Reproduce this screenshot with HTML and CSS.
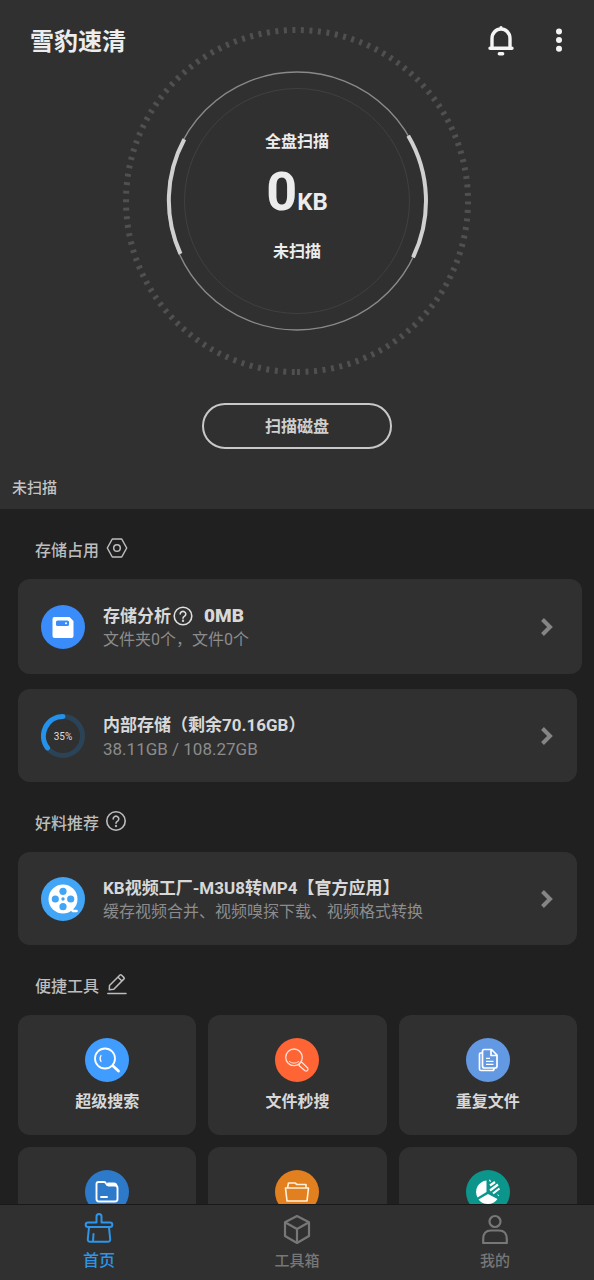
FILE: index.html
```html
<!DOCTYPE html>
<html lang="zh-CN">
<head>
<meta charset="utf-8">
<meta name="viewport" content="width=device-width, initial-scale=1">
<title>雪豹速清</title>
<link rel="stylesheet" href="styles.css">
</head>
<body>
<div class="app">
  <main class="content">
    <section class="hero">
      <header class="topbar">
        <h1 class="brand">雪豹速清</h1>
        <button class="icon-btn" aria-label="通知">
          <svg width="28" height="32" viewBox="0 0 28 32" fill="none" stroke="#f4f4f4" stroke-width="3.4" stroke-linecap="round" stroke-linejoin="round"><path d="M5 24V14.500a9 9.500 0 0 1 18 0V24M3 24.300H25M14 3.700V5M12.300 29.700H15.700"/></svg>
        </button>
        <button class="icon-btn" aria-label="更多">
          <svg width="8" height="32" viewBox="0 0 8 32" fill="#f4f4f4"><circle cx="4" cy="7.500" r="3"/><circle cx="4" cy="16" r="3"/><circle cx="4" cy="24.800" r="3"/></svg>
        </button>
      </header>
      <div class="dial">
        <svg class="dial-rings" width="352" height="352" viewBox="0 0 352 352" fill="none">
          <path d="M176 347A171 171 0 0 0 176 5A171 171 0 0 0 176 347" stroke="#505050" stroke-width="6" stroke-dasharray="3 5.550"/>
          <circle cx="176" cy="176" r="129" stroke="#8a8a8a" stroke-width="1.400"/>
          <circle cx="176" cy="176" r="112.500" stroke="#404040"/>
          <path d="M287.200 110.800A128.500 128.500 0 0 1 292 232.300M63.300 114.300A128.500 128.500 0 0 0 59.500 228.900" stroke="#d0d0d0" stroke-width="4"/>
        </svg>
        <div class="dial-text">
          <span class="dial-label">全盘扫描</span>
          <span class="dial-value">0<span class="dial-unit">KB</span></span>
          <span class="dial-label">未扫描</span>
        </div>
      </div>
      <button class="scan-btn">扫描磁盘</button>
      <p class="scan-status">未扫描</p>
    </section>

    <section class="group">
      <h2 class="group-title">存储占用
        <svg width="22" height="22" viewBox="0 0 22 22" fill="none" stroke="#bdbdbd" stroke-width="1.500" stroke-linejoin="round"><path d="M6.300 2H15.700L20.700 11L15.700 20H6.300L1.300 11Z"/><circle cx="11" cy="11" r="3.300"/></svg>
      </h2>
      <div class="card-list">
        <a class="card card-wide" href="#analysis">
          <svg width="44" height="44" viewBox="0 0 44 44"><circle cx="22" cy="22" r="22" fill="#3a8cfa"/><path d="M13.500 12H28.500L32.500 16V31Q32.500 33 30.500 33H13.500Q11.500 33 11.500 31V14Q11.500 12 13.500 12Z" fill="#fff"/><rect x="15" y="15.500" width="13" height="5.500" rx="1.500" fill="#3a8cfa"/><circle cx="25" cy="18.200" r="1" fill="#fff"/></svg>
          <span class="card-text">
            <span class="card-title">存储分析<svg width="20" height="20" viewBox="0 0 20 20" fill="none" stroke="#dedede" stroke-width="1.600" stroke-linecap="round"><circle cx="10" cy="10" r="8.800"/><path d="M7.200 8a2.800 2.600 0 1 1 4.400 2.100Q10 11.100 10 12.200"/><circle cx="10" cy="14.800" r=".4"/></svg><b class="card-amount">0MB</b></span>
            <span class="card-sub">文件夹0个，文件0个</span>
          </span>
          <svg class="chevron" width="12" height="18" viewBox="0 0 12 18"><path d="M1.500 1.500L9 9L1.500 16.500"/></svg>
        </a>
        <a class="card" href="#internal">
          <svg width="44" height="44" viewBox="0 0 44 44" fill="none" stroke-width="5"><circle cx="22" cy="22" r="19.500" stroke="#2b4357"/><path d="M22 2.500A19.500 19.500 0 0 0 6.500 33.900" stroke="#2492ea" stroke-linecap="round"/><text class="ring-text" x="22" y="26" text-anchor="middle">35%</text></svg>
          <span class="card-text">
            <span class="card-title">内部存储（剩余70.16GB）</span>
            <span class="card-sub card-sub-latin">38.11GB / 108.27GB</span>
          </span>
          <svg class="chevron" width="12" height="18" viewBox="0 0 12 18"><path d="M1.500 1.500L9 9L1.500 16.500"/></svg>
        </a>
      </div>
    </section>

    <section class="group">
      <h2 class="group-title">好料推荐
        <svg width="20" height="20" viewBox="0 0 20 20" fill="none" stroke="#bdbdbd" stroke-width="1.600" stroke-linecap="round"><circle cx="10" cy="10" r="9.200"/><path d="M7.200 8a2.800 2.700 0 1 1 4.400 2.100Q10 11.100 10 12.200"/><circle cx="10" cy="15" r=".4"/></svg>
      </h2>
      <div class="card-list">
        <a class="card" href="#video">
          <svg width="44" height="44" viewBox="0 0 44 44"><circle cx="22" cy="22" r="22" fill="#42a5f5"/><circle cx="22" cy="22" r="14.500" fill="#fff"/><path d="M29 31L32 34H35.500" fill="none" stroke="#fff" stroke-width="2.600" stroke-linecap="round"/><g fill="#42a5f5"><circle cx="22" cy="14.300" r="3.600"/><circle cx="22" cy="29.700" r="3.600"/><circle cx="14.300" cy="22" r="3.600"/><circle cx="29.700" cy="22" r="3.600"/><circle cx="22" cy="22" r="1.700"/></g></svg>
          <span class="card-text">
            <span class="card-title">KB视频工厂-M3U8转MP4【官方应用】</span>
            <span class="card-sub">缓存视频合并、视频嗅探下载、视频格式转换</span>
          </span>
          <svg class="chevron" width="12" height="18" viewBox="0 0 12 18"><path d="M1.500 1.500L9 9L1.500 16.500"/></svg>
        </a>
      </div>
    </section>

    <section class="group">
      <h2 class="group-title">便捷工具
        <svg width="22" height="22" viewBox="0 0 22 22" fill="none" stroke="#bdbdbd" stroke-width="1.500" stroke-linejoin="round" stroke-linecap="round"><path d="M3.500 12.500L14 2Q14.700 1.300 15.400 2L18 4.600Q18.600 5.200 18 5.900L7.800 16.200L3.300 16.800ZM12 4.200L16 8M1.800 20.500H20"/></svg>
      </h2>
      <div class="tools">
        <a class="tool" href="#search">
          <svg width="44" height="44" viewBox="0 0 44 44" fill="none" stroke="#fff" stroke-linecap="round"><circle cx="22" cy="22" r="22" fill="#409dff" stroke="none"/><circle cx="20" cy="20.500" r="10" stroke-width="1.800"/><path d="M16 17.500Q14 20.500 16 23.500" stroke-width="1.200"/><path d="M28 28L33.500 33" stroke-width="2.800"/></svg>
          超级搜索
        </a>
        <a class="tool" href="#quick">
          <svg width="44" height="44" viewBox="0 0 44 44" fill="none" stroke="#ffe0d6" stroke-width="1.300" stroke-linejoin="round"><circle cx="22" cy="22" r="22" fill="#ff6434" stroke="none"/><circle cx="19" cy="19.300" r="8.300"/><path d="M14 23.300Q19 27 24 23.300" stroke-width="1"/><path d="M24.500 25.500L26.300 23.700L32.700 30Q33.500 31.500 32.500 32.500Q31.300 33.500 30 32.700L24 27.500Z"/></svg>
          文件秒搜
        </a>
        <a class="tool" href="#duplicate">
          <svg width="44" height="44" viewBox="0 0 44 44" fill="none" stroke="#fff" stroke-width="1.700" stroke-linejoin="round"><circle cx="22" cy="22" r="22" fill="#6399e3" stroke="none"/><path d="M18 11.500H25.500L31 17V28Q31 30 29 30H18.500Q16.500 30 16.500 28V13.500Q16.500 11.500 18 11.500ZM25 12V17.500H30.500M16 15H14.500Q13.500 15 13.500 16V31Q13.500 32.500 15 32.500H26.500Q28 32.500 28 30.500"/><path d="M20 20.300H24M20 23.300H27.500M20 26.300H27.500" stroke-width="1.300"/></svg>
          重复文件
        </a>
        <a class="tool" href="#folders" aria-label="文件夹">
          <svg width="44" height="44" viewBox="0 0 44 44" fill="none" stroke="#fff" stroke-width="1.900" stroke-linejoin="round" stroke-linecap="round"><circle cx="22" cy="22" r="22" fill="#2d79ca" stroke="none"/><path d="M13.500 12H19Q20.500 12 21 13.500Q21.800 15.500 23.500 15.500H30Q32.500 15.500 32.500 18V29Q32.500 31.500 30 31.500H14Q11.500 31.500 11.500 29V14Q11.500 12 13.500 12ZM23 13.500H29Q31 13.500 31.500 15.500M16 27H22"/></svg>
        </a>
        <a class="tool" href="#large" aria-label="大文件">
          <svg width="44" height="44" viewBox="0 0 44 44" fill="none" stroke="#fff1dc" stroke-width="1.600" stroke-linejoin="round"><circle cx="22" cy="22" r="22" fill="#e2801f" stroke="none"/><path d="M10.500 18H33.500L32 31H12ZM12.500 18L13.500 13H20L22 14.500H31V18"/></svg>
        </a>
        <a class="tool" href="#chart" aria-label="空间统计">
          <svg width="44" height="44" viewBox="0 0 44 44"><circle cx="22" cy="22" r="22" fill="#0b958b"/><path d="M20.500 10.500V22L11.500 27.500A11.500 11.500 0 0 1 20.500 10.500ZM22 24L31.500 29Q28 34 22 34Q16 34 12.500 29.500Z" fill="#fff"/><path d="M24 15.500L29 12M24 20.500L32 14.500M27 23.500L33.500 18.500M32 25.500L32.500 25M23.500 11L24.500 10.500" stroke="#fff" stroke-width="2.200" fill="none"/></svg>
        </a>
      </div>
    </section>
  </main>

  <nav class="tabs">
    <a class="tab tab-active" href="#home">
      <svg width="32" height="32" viewBox="0 0 32 32" fill="none" stroke="#2d95ea" stroke-width="2" stroke-linejoin="round" stroke-linecap="round"><path d="M13.500 10.500V4.500a2.500 2.500 0 0 1 5 0V10.500H27a2.300 2.300 0 0 1 0 4.600H5a2.300 2.300 0 0 1 0-4.600H13.500M6 15.500L4.800 27Q4.600 29.800 7.300 29.800H24.700Q27.400 29.800 27.200 27L26 15.500M10.500 22L10 29.500"/></svg>
      首页
    </a>
    <a class="tab" href="#toolbox">
      <svg width="32" height="32" viewBox="0 0 32 32" fill="none" stroke="#777" stroke-width="2.200" stroke-linejoin="round"><path d="M16 4L28 10.300V24L16 31L4 24V10.300ZM4 10.300L16 17L28 10.300M16 17V31"/></svg>
      工具箱
    </a>
    <a class="tab" href="#me">
      <svg width="32" height="32" viewBox="0 0 32 32" fill="none" stroke="#777" stroke-width="2.200" stroke-linejoin="round"><circle cx="16" cy="9.500" r="5.500"/><path d="M4.200 31V27Q4.200 18.500 12 18.500H20Q27.800 18.500 27.800 27V31Z"/></svg>
      我的
    </a>
  </nav>
</div>
</body>
</html>
```
FILE: styles.css
```css
* {
  box-sizing: border-box;
}

body {
  margin: 0;
  background: #202020;
  color: #d8d8d8;
  font-family: Roboto, "Noto Sans CJK SC", sans-serif;
  font-size: 16px;
  font-weight: 500;
  line-height: 24px;
}

h1,
h2,
p {
  margin: 0;
  font-weight: 500;
}

a {
  color: inherit;
  text-decoration: none;
}

svg {
  display: block;
  flex: none;
}

button {
  padding: 0;
  border: 0;
  background: none;
  color: inherit;
  font: inherit;
  cursor: pointer;
}

.app {
  display: flex;
  flex-direction: column;
  height: 100vh;
}

.content {
  flex: 1;
  min-height: 0;
  overflow-y: auto;
  scrollbar-width: none;
}

.hero {
  display: grid;
  justify-items: center;
  background: #303030;
  padding-bottom: 9px;
}

.topbar {
  grid-area: 1 / 1;
  z-index: 1;
  align-self: start;
  justify-self: stretch;
  display: flex;
  align-items: center;
  gap: 40px;
  padding: 24px 31px 0 30px;
}

.brand {
  flex: 1;
  padding-top: 4px;
  color: #ececec;
  font-size: 24px;
  font-weight: 700;
  line-height: 28px;
}

.dial {
  grid-area: 1 / 1;
  display: grid;
  place-items: center;
  padding-top: 25px;
}

.dial-rings,
.dial-text {
  grid-area: 1 / 1;
}

.dial-text {
  display: flex;
  flex-direction: column;
  align-items: center;
  gap: 6px;
  color: #ececec;
  padding-bottom: 8px;
}

.dial-label {
  font-weight: 700;
}

.dial-value {
  font-size: 54px;
  font-weight: 700;
  line-height: 64px;
}

.dial-unit {
  font-size: 24px;
}

.scan-btn {
  width: 190px;
  height: 46px;
  margin-top: 26px;
  padding-top: 2px;
  border: 2px solid #c8c8c8;
  border-radius: 23px;
  color: #cfcfcf;
  font-weight: 700;
}

.scan-status {
  justify-self: start;
  margin-top: 27px;
  padding-left: 12px;
  color: #c4c4c4;
  font-size: 15px;
}

.group {
  padding: 0 17px 0 18px;
}

.group-title {
  display: flex;
  align-items: center;
  gap: 7px;
  height: 70px;
  padding: 14px 0 0 17px;
  color: #bdbdbd;
  font-size: 16px;
}

.group-title svg {
  margin-bottom: 6px;
}

.card-list {
  display: flex;
  flex-direction: column;
  gap: 15px;
}

.card {
  display: flex;
  align-items: center;
  gap: 18px;
  padding: 21px 24px 21px 23px;
  border-radius: 12px;
  background: #303030;
}

.card-wide {
  margin-right: -5px;
  padding: 22px 29px 22px 23px;
}

.card-text {
  flex: 1;
  display: flex;
  flex-direction: column;
  padding-top: 3px;
}

.card-title {
  display: flex;
  align-items: center;
  gap: 2px;
  font-size: 17px;
  font-weight: 700;
}

.card-amount {
  margin-left: 9px;
  font-size: 19px;
}

.card-sub {
  color: #8c8c8c;
  font-weight: 400;
}

.card-sub-latin {
  font-size: 17px;
}

.ring-text {
  fill: #dedede;
  stroke: none;
  font-size: 10px;
  font-weight: 400;
}

.chevron {
  fill: none;
  stroke: #858585;
  stroke-width: 4;
}

.tools {
  display: grid;
  grid-template-columns: repeat(3, 1fr);
  gap: 12px;
}

.tool {
  display: flex;
  flex-direction: column;
  align-items: center;
  gap: 8px;
  min-height: 120px;
  padding-top: 23px;
  border-radius: 12px;
  background: #303030;
  font-weight: 700;
}

.tabs {
  display: grid;
  grid-template-columns: repeat(3, 1fr);
  height: 76px;
  border-top: 1px solid #181818;
  background: #303030;
}

.tab {
  display: flex;
  flex-direction: column;
  align-items: center;
  gap: 5px;
  padding-top: 7px;
  color: #777;
  font-size: 15px;
}

.tab-active {
  color: #2d95ea;
  font-size: 16px;
}
```
